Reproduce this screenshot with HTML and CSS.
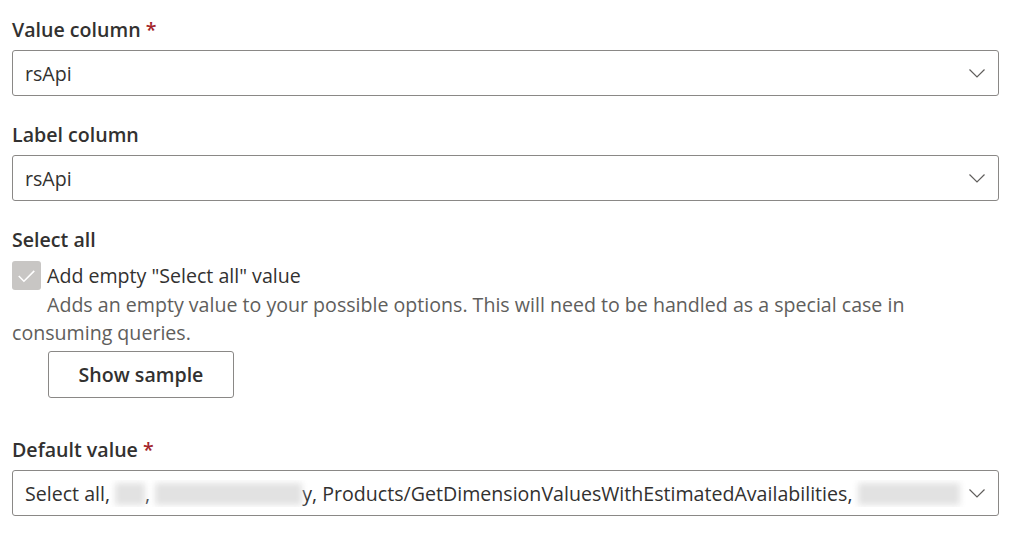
FILE: index.html
```html
<!DOCTYPE html>
<html>
<head>
<meta charset="utf-8">
<link rel="stylesheet" href="styles.css">
</head>
<body>
<div class="form">
  <div class="field">
    <div class="label">Value column <span class="req">*</span></div>
    <div class="dropdown"><span class="value">rsApi</span><svg class="chev" viewBox="0 0 16 9"><path d="M0.5 0.5 L8 8 L15.5 0.5" /></svg></div>
  </div>
  <div class="field">
    <div class="label">Label column</div>
    <div class="dropdown"><span class="value">rsApi</span><svg class="chev" viewBox="0 0 16 9"><path d="M0.5 0.5 L8 8 L15.5 0.5" /></svg></div>
  </div>
  <div class="field">
    <div class="label">Select all</div>
    <div class="check-row">
      <span class="box"><svg viewBox="0 0 28 28"><path d="M6.5 14.5 L11.5 19.5 L21.5 9.5" /></svg></span>
      <span class="check-label">Add empty "Select all" value</span>
    </div>
    <div class="desc"><span class="indent"></span>Adds an empty value to your possible options. This will need to be handled as a special case in consuming queries.</div>
    <button class="btn">Show sample</button>
  </div>
  <div class="field">
    <div class="label">Default value <span class="req">*</span></div>
    <div class="dropdown"><span class="value">Select all, <span class="blur b1"></span>, <span class="blur b2"></span>y, Products/GetDimensionValuesWithEstimatedAvailabilities, <span class="blur b3"></span></span><svg class="chev" viewBox="0 0 16 9"><path d="M0.5 0.5 L8 8 L15.5 0.5" /></svg></div>
  </div>
</div>
</body>
</html>
```
FILE: styles.css
```css
html, body {
  margin: 0;
  padding: 0;
  background: #ffffff;
}
body {
  font-family: "Open Sans", "Noto Sans", sans-serif;
  font-size: 19.6px;
  color: #323130;
}
.form {
  padding: 9px 25px 0 12px;
  display: flex;
  flex-direction: column;
  gap: 18px;
}
.field {
  display: flex;
  flex-direction: column;
}
.label {
  font-weight: 600;
  line-height: 28px;
  padding: 7px 0 6px;
}
.req {
  color: #a4262c;
}
.dropdown {
  height: 46px;
  box-sizing: border-box;
  border: 1.5px solid #8a8886;
  border-radius: 3px;
  display: flex;
  align-items: center;
  padding: 0 13px 0 12px;
}
.value {
  flex: 1;
  white-space: nowrap;
  overflow: hidden;
}
.chev {
  width: 16px;
  height: 9px;
  fill: none;
  stroke: #605e5c;
  stroke-width: 1.2;
}
.check-row {
  display: flex;
  align-items: center;
  gap: 6px;
  height: 29px;
  margin-top: 1px;
}
.box {
  width: 29px;
  height: 29px;
  border-radius: 3px;
  background: #c8c6c4;
  display: flex;
}
.box svg {
  width: 29px;
  height: 29px;
  fill: none;
  stroke: #ffffff;
  stroke-width: 1.5;
}
.check-label {
  line-height: 28px;
}
.desc {
  color: #605e5c;
  line-height: 28px;
  margin-top: 1px;
}
.indent {
  display: inline-block;
  width: 35px;
}
.btn {
  align-self: flex-start;
  margin: 4px 0 0 36px;
  width: 186px;
  height: 47px;
  box-sizing: border-box;
  border: 1.5px solid #8a8886;
  border-radius: 3px;
  background: #ffffff;
  font-family: inherit;
  font-size: 19.6px;
  font-weight: 600;
  color: #323130;
}
.field + .field:last-child {
  margin-top: 13px;
}
.blur {
  display: inline-block;
  height: 22px;
  vertical-align: -4px;
  background: #e2e2e2;
  filter: blur(3px);
}
.b1 { width: 30px; }
.b2 { width: 147px; }
.b3 { width: 102px; }
```
